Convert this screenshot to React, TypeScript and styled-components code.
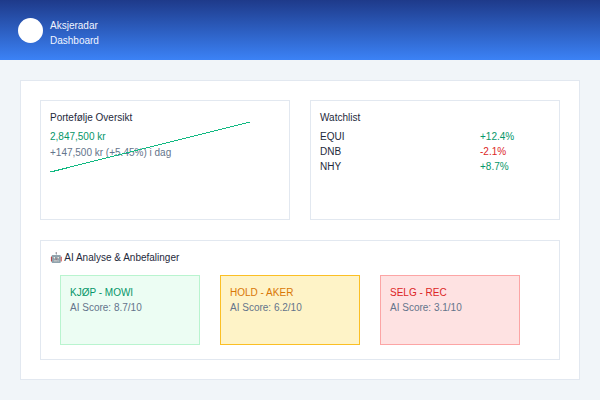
import React from "react";
import styled, { createGlobalStyle } from "styled-components";

const Global = createGlobalStyle`
  html, body { margin: 0; padding: 0; }
  body {
    background: #f1f5f9;
    font-family: "Liberation Sans", Arial, sans-serif;
    font-size: 10px;
    line-height: 15px;
    color: #1e293b;
  }
`;

const Header = styled.header`
  height: 60px;
  box-sizing: border-box;
  background: linear-gradient(180deg, #1e3a8a 0%, #3b82f6 100%);
  display: flex;
  align-items: center;
  padding-left: 18px;
  gap: 7px;
`;

const Logo = styled.div`
  width: 25px;
  height: 25px;
  border-radius: 50%;
  background: #ffffff;
`;

const Brand = styled.div`
  display: flex;
  flex-direction: column;
  color: #f1f5ff;
  font-size: 10px;
  line-height: 15px;
  margin-top: 6px;
`;

const Main = styled.main`
  padding: 20px;
`;

const Panel = styled.section`
  background: #ffffff;
  border: 1px solid #e2e8f0;
  height: 300px;
  box-sizing: border-box;
  padding: 19px;
  display: flex;
  flex-direction: column;
  gap: 20px;
`;

const TopRow = styled.div`
  display: grid;
  grid-template-columns: 1fr 1fr;
  gap: 20px;
`;

const Card = styled.div`
  position: relative;
  border: 1px solid #e2e8f0;
  height: 120px;
  box-sizing: border-box;
  padding: 9px;
`;

const CardTitle = styled.div`
  color: #1e293b;
  margin-bottom: 4px;
`;

const Value = styled.div<{ $tone: "green" | "gray" }>`
  color: ${(p) => (p.$tone === "green" ? "#059669" : "#64748b")};
  line-height: 16px;
`;

const Chart = styled.svg`
  position: absolute;
  left: 9px;
  top: 20px;
  width: 201px;
  height: 52px;
  overflow: visible;
`;

const WatchGrid = styled.div`
  display: grid;
  grid-template-columns: 160px 1fr;
  row-gap: 0;
`;

const Ticker = styled.div`
  color: #1e293b;
`;

const Change = styled.div<{ $up: boolean }>`
  color: ${(p) => (p.$up ? "#059669" : "#dc2626")};
`;

const Boxes = styled.div`
  display: flex;
  gap: 20px;
  padding: 6px 10px 0;
`;

const tones = {
  buy: { bg: "#ecfdf3", border: "#b9f4cf", text: "#059669" },
  hold: { bg: "#fef3c7", border: "#fbbf24", text: "#d97706" },
  sell: { bg: "#fee2e2", border: "#fca5a5", text: "#dc2626" },
};

const RecBox = styled.div<{ $tone: keyof typeof tones }>`
  width: 140px;
  height: 70px;
  box-sizing: border-box;
  padding: 9px;
  background: ${(p) => tones[p.$tone].bg};
  border: 1px solid ${(p) => tones[p.$tone].border};
`;

const RecTitle = styled.div<{ $tone: keyof typeof tones }>`
  color: ${(p) => tones[p.$tone].text};
`;

const RecScore = styled.div`
  color: #64748b;
`;

const watch = [
  { t: "EQUI", c: "+12.4%", up: true },
  { t: "DNB", c: "-2.1%", up: false },
  { t: "NHY", c: "+8.7%", up: true },
];

const recs: { tone: keyof typeof tones; title: string; score: string }[] = [
  { tone: "buy", title: "KJØP - MOWI", score: "AI Score: 8.7/10" },
  { tone: "hold", title: "HOLD - AKER", score: "AI Score: 6.2/10" },
  { tone: "sell", title: "SELG - REC", score: "AI Score: 3.1/10" },
];

export default function App() {
  return (
    <>
      <Global />
      <Header>
        <Logo />
        <Brand>
          <span>Aksjeradar</span>
          <span>Dashboard</span>
        </Brand>
      </Header>
      <Main>
        <Panel>
          <TopRow>
            <Card>
              <CardTitle>Portefølje Oversikt</CardTitle>
              <Value $tone="green">2,847,500 kr</Value>
              <Value $tone="gray">+147,500 kr (+5.45%) i dag</Value>
              <Chart viewBox="0 0 201 52">
                <line
                  x1="0.5"
                  y1="51"
                  x2="200"
                  y2="1"
                  stroke="#10b981"
                  strokeWidth="1"
                  shapeRendering="crispEdges"
                />
              </Chart>
            </Card>
            <Card>
              <CardTitle>Watchlist</CardTitle>
              <WatchGrid>
                {watch.map((w) => (
                  <React.Fragment key={w.t}>
                    <Ticker>{w.t}</Ticker>
                    <Change $up={w.up}>{w.c}</Change>
                  </React.Fragment>
                ))}
              </WatchGrid>
            </Card>
          </TopRow>
          <Card>
            <CardTitle>🤖 AI Analyse &amp; Anbefalinger</CardTitle>
            <Boxes>
              {recs.map((r) => (
                <RecBox key={r.title} $tone={r.tone}>
                  <RecTitle $tone={r.tone}>{r.title}</RecTitle>
                  <RecScore>{r.score}</RecScore>
                </RecBox>
              ))}
            </Boxes>
          </Card>
        </Panel>
      </Main>
    </>
  );
}
